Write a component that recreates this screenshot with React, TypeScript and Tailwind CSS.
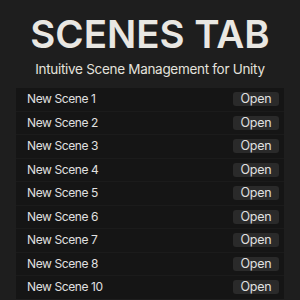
import React from "react";

const scenes = ["New Scene 1","New Scene 2","New Scene 3","New Scene 4","New Scene 5","New Scene 6","New Scene 7","New Scene 8","New Scene 10"];

export default function App() {
  return (
    <div className="w-[300px] h-[300px] bg-[#1e1e1e] overflow-hidden flex flex-col items-center" style={{fontFamily: "Inter, 'Noto Sans', sans-serif"}}>
      <div className="mt-[15px] text-[38.5px] leading-[38px] font-semibold text-[#e9e7e2]">SCENES TAB</div>
      <div className="mt-[7px] text-[13.5px] leading-[18px] tracking-[-0.3px] text-[#e4e2dd]">Intuitive Scene Management for Unity</div>
      <div className="mt-[10px] w-[268px] flex flex-col gap-px bg-[#1b1b1b]">
        {scenes.map((s) => (
          <div key={s} className="h-[22.5px] bg-[#151515] flex items-center justify-between pl-[11px] pr-[5px]">
            <span className="text-[12px] tracking-[-0.4px] text-[#e0e0e0]">{s}</span>
            <span className="w-[46px] h-[14px] rounded-[3px] bg-[#2a2a2a] text-[12.5px] leading-[14px] tracking-[-0.2px] text-[#e0e0e0] flex items-center justify-center">Open</span>
          </div>
        ))}
      </div>
    </div>
  );
}
